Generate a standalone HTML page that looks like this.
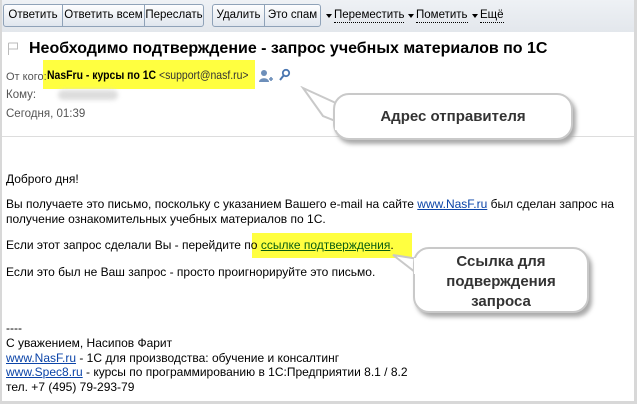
<!DOCTYPE html>
<html><head><meta charset="utf-8"><style>
*{margin:0;padding:0;box-sizing:border-box}
body{width:637px;height:404px;background:#d8d8d8;position:relative;overflow:hidden;font-family:"Liberation Sans",Arial,sans-serif;font-size:12px;color:#000}
#w{position:absolute;left:2px;top:0;width:632px;height:401px;background:#fff}
#tb{position:absolute;left:0;top:0;width:632px;height:32px;background:linear-gradient(#eef1f5,#e3e7ec)}
.g{position:absolute;top:4px;height:23px;border:1px solid #8fa2b8;border-radius:3px;background:linear-gradient(#fdfdfe,#e0e6ee);display:flex}
.g span{line-height:21px;border-left:1px solid #8fa2b8;font-size:11.5px;text-align:center;white-space:nowrap;overflow:hidden}
.g span:first-child{border-left:none}
.m{position:absolute;top:9px;font-size:11.5px;border-bottom:1px dotted #000;line-height:13px;white-space:nowrap}
.m:before{content:"";position:absolute;left:-8px;top:5px;border:3px solid transparent;border-top:4px solid #000}
.a{position:absolute;white-space:nowrap}
.gr{color:#555}
a{color:#0b44a8;text-decoration:underline}
.hl{position:absolute;background:#ffff40}
.co{position:absolute;background:#fff;border:2px solid #c9c9c9;border-radius:16px;box-shadow:3px 4px 4px #aaa;font-weight:bold;font-size:15px;color:#333;text-align:center}
</style></head><body>
<div id="w">
<div id="tb"></div>
<div class="g" style="left:1px"><span style="width:58px">Ответить</span><span style="width:82px">Ответить всем</span><span style="width:59px">Переслать</span></div>
<div class="g" style="left:210px"><span style="width:51px">Удалить</span><span style="width:56px">Это спам</span></div>
<div class="m" style="left:332px">Переместить</div>
<div class="m" style="left:414px">Пометить</div>
<div class="m" style="left:478px">Ещё</div>

<svg class="a" style="left:5px;top:42px" width="12" height="14"><path d="M1.5 1v12M1.5 1h9v6h-9" fill="#fff" stroke="#bbb"/></svg>
<div class="a" style="left:27px;top:40px;font-size:16px;font-weight:bold">Необходимо подтверждение - запрос учебных материалов по 1С</div>

<div class="hl" style="left:41px;top:60px;width:212px;height:29px"></div>
<div class="a gr" style="left:4px;top:71px;font-size:11px">От кого:</div>
<div class="a" style="left:45px;top:68px;font-weight:bold;font-size:12px;transform:scaleX(0.87);transform-origin:0 0">NasFru - курсы по 1С <span style="font-weight:normal;font-size:12px;color:#333">&lt;support@nasf.ru&gt;</span></div>
<svg class="a" style="left:256px;top:68px" width="36" height="16"><circle cx="6" cy="5" r="3" fill="#6d8fba"/><path d="M1 14c0-5 10-5 10 0z" fill="#6d8fba"/><path d="M11 11h4M13 9v4" stroke="#6d8fba" stroke-width="1.6"/><circle cx="28" cy="5" r="3.2" fill="none" stroke="#4a76b0" stroke-width="1.8"/><path d="M26 7l-4 5" stroke="#4a76b0" stroke-width="2"/></svg>
<div class="a gr" style="left:4px;top:89px;font-size:11.5px">Кому:</div>
<div class="a" style="left:56px;top:90px;width:60px;height:10px;background:#ddd;border-radius:5px;filter:blur(2px)"></div>
<div class="a gr" style="left:4px;top:108px;font-size:11.5px">Сегодня, 01:39</div>
<div class="a" style="left:0;top:136px;width:632px;height:1px;background:#ddd"></div>

<div class="a" style="left:4px;top:172px">Доброго дня!</div>
<div class="a" style="left:4px;top:197px;line-height:15px">Вы получаете это письмо, поскольку с указанием Вашего e-mail на сайте <a>www.NasF.ru</a> был сделан запрос на<br>получение ознакомительных учебных материалов по 1С.</div>
<div class="hl" style="left:250px;top:233px;width:160px;height:25px"></div>
<div class="a" style="left:4px;top:238px">Если этот запрос сделали Вы - перейдите по <a style="color:#0a5d10">ссылке подтверждения</a>.</div>
<div class="a" style="left:4px;top:265px">Если это был не Ваш запрос - просто проигнорируйте это письмо.</div>

<div class="a" style="left:4px;top:321px;line-height:14.8px">----<br>С уважением, Насипов Фарит<br><a>www.NasF.ru</a> - 1С для производства: обучение и консалтинг<br><a>www.Spec8.ru</a> - курсы по программированию в 1С:Предприятии 8.1 / 8.2<br>тел. +7 (495) 79-293-79</div>

<svg class="a" style="left:296px;top:86px" width="60" height="50"><path d="M5 2L40 18L50 40L25 30Z" fill="#fff" stroke="#c9c9c9" stroke-width="2"/></svg>
<div class="co" style="left:331px;top:93px;width:240px;height:47px;line-height:43px">Адрес отправителя</div>
<svg class="a" style="left:388px;top:252px" width="50" height="40"><path d="M3 3L35 8L40 28L25 20Z" fill="#fff" stroke="#c9c9c9" stroke-width="2"/></svg>
<div class="co" style="left:411px;top:247px;width:176px;height:66px;line-height:20px;padding-top:3px">Ссылка для<br>подверждения<br>запроса</div>
<svg class="a" style="left:330px;top:110px" width="20" height="20"><rect x="3" y="0" width="10" height="20" fill="#fff"/></svg>
<svg class="a" style="left:410px;top:258px" width="14" height="20"><rect x="2" y="0" width="10" height="16" fill="#fff"/></svg>
</div>
</body></html>
